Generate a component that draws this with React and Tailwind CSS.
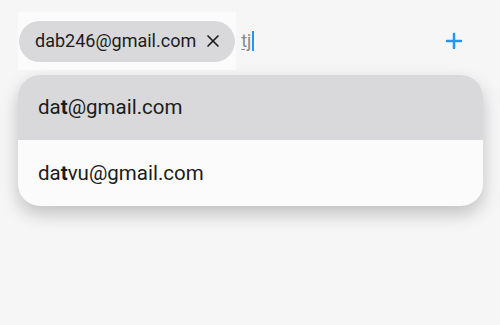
import { X, Plus } from "lucide-react";

export default function App() {
  return (
    <div className="w-[500px] h-[325px] bg-[#f6f6f7] font-['Roboto',sans-serif] text-[#1c1c1c] overflow-hidden">
      {/* Input row */}
      <div className="flex items-center h-[82px] pl-[18px] pr-[34px]">
        <div className="flex items-center bg-[#fbfbfb] h-[58px] pl-px pr-px">
          <div className="flex items-center h-[41px] rounded-full bg-[#d9d9db] pl-4 pr-[12px]">
            <span className="text-[18px] leading-none">dab246@gmail.com</span>
            <X className="ml-[7px] w-[20px] h-[20px]" strokeWidth={2} />
          </div>
        </div>
        <div className="flex items-center ml-[5px]">
          <span className="text-[18px] leading-none text-[#8a8a8a] underline underline-offset-2">tj</span>
          <span className="w-[2px] h-[20px] bg-[#2196f3] ml-[1px]" />
        </div>
        <div className="flex-1" />
        <Plus className="w-[24px] h-[24px] text-[#2196f3]" strokeWidth={2.5} />
      </div>

      {/* Suggestions */}
      <div className="mx-[18px] -mt-[7px] w-[465px] rounded-[22px] overflow-hidden bg-[#fbfbfb] shadow-[0_8px_18px_rgba(0,0,0,0.22)]">
        <div className="h-[65px] flex items-center pl-[20px] bg-[#d9d9db] text-[20.5px]">
          da<span className="font-bold">t</span>@gmail.com
        </div>
        <div className="h-[66px] flex items-center pl-[20px] text-[20.5px]">
          da<span className="font-bold">t</span>vu@gmail.com
        </div>
      </div>
    </div>
  );
}
